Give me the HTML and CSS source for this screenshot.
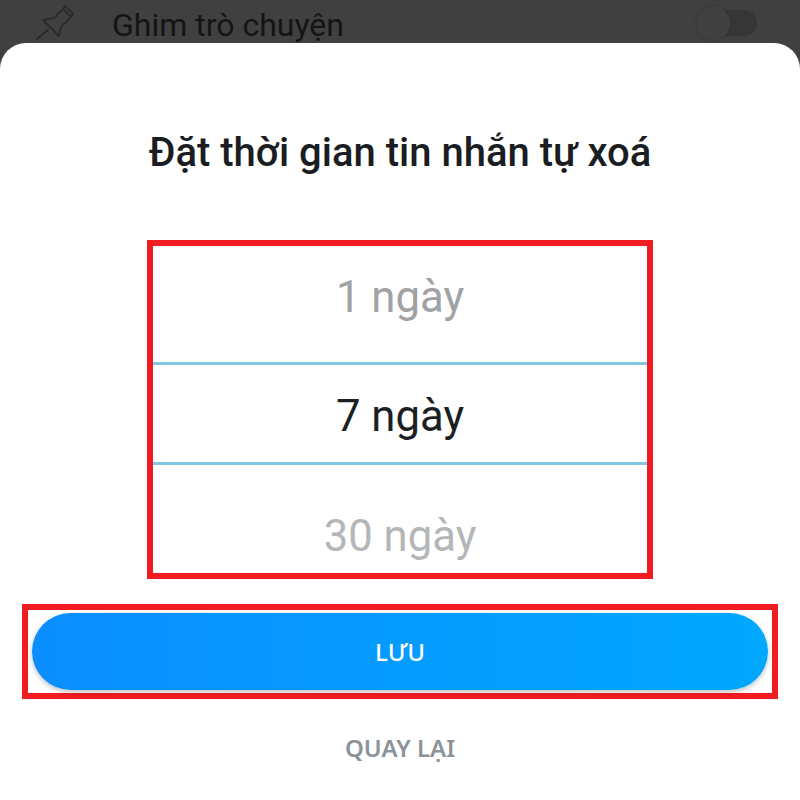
FILE: index.html
```html
<!DOCTYPE html>
<html lang="vi">
<head>
<meta charset="utf-8">
<title>Đặt thời gian tin nhắn tự xoá</title>
<link rel="stylesheet" href="styles.css">
</head>
<body>
<div class="backdrop">
  <svg class="pin" width="50" height="44" viewBox="0 0 50 44" fill="none" stroke="#2a2a2a" stroke-width="1.8" stroke-linejoin="round">
    <path d="M35 6 L43 14 L41 17 L33 9 Z"/>
    <path d="M33 9 L24 18 Q18 19 13 20 L29 36 Q30 31 31 27 L41 17"/>
    <path d="M18 30 L7 39" stroke-linecap="round"/>
  </svg>
  <span class="row-label">Ghim trò chuyện</span>
  <div class="toggle"><div class="knob"></div></div>
</div>
<main class="sheet">
  <h1 class="title">Đặt thời gian tin nhắn tự xoá</h1>
  <section class="picker">
    <div class="option option-top">1 ngày</div>
    <div class="option option-active">7 ngày</div>
    <div class="option option-bottom">30 ngày</div>
  </section>
  <div class="save-frame">
    <button class="save">LƯU</button>
  </div>
  <div class="back">QUAY LẠI</div>
</main>
</body>
</html>
```
FILE: styles.css
```css
* { box-sizing: border-box; }
html, body { margin: 0; padding: 0; }
body {
  width: 800px;
  height: 800px;
  overflow: hidden;
  background: #404040;
  font-family: Roboto, "Noto Sans", sans-serif;
  position: relative;
}
.backdrop {
  height: 43px;
  display: flex;
  align-items: flex-start;
  background: #404040;
  overflow: hidden;
  position: relative;
}
.pin { flex: none; margin: 0 0 0 30px; }
.row-label {
  margin: 5px 0 0 32px;
  font-size: 32px;
  line-height: 40px;
  color: #141414;
}
.toggle {
  width: 60px;
  height: 26px;
  margin: 10px 43px 0 auto;
  border-radius: 13px;
  background: #363636;
  position: relative;
}
.knob {
  position: absolute;
  left: -1px;
  top: -4px;
  width: 34px;
  height: 34px;
  border-radius: 50%;
  background: #414141;
  box-shadow: 0 0 2px #303030;
}
.sheet {
  height: 757px;
  background: #fff;
  border-radius: 26px 26px 0 0;
  display: flex;
  flex-direction: column;
  align-items: center;
}
.title {
  margin: 85px 0 0;
  height: 50px;
  font-size: 40px;
  line-height: 50px;
  font-weight: 500;
  color: #1a1d21;
  white-space: nowrap;
}
.picker {
  width: 506px;
  height: 339px;
  margin-top: 62px;
  border: 6px solid #f01c22;
  display: flex;
  flex-direction: column;
}
.option {
  display: flex;
  align-items: center;
  justify-content: center;
  font-size: 43.7px;
  white-space: nowrap;
}
.option-top { height: 116px; padding-bottom: 14px; color: #a0a2a4; }
.option-active {
  height: 103px;
  padding-top: 4px;
  color: #1c1f23;
  border-top: 3px solid #7ec8e3;
  border-bottom: 3px solid #7ec8e3;
}
.option-bottom { height: 108px; padding-top: 33px; color: #b4b6b8; }
.save-frame {
  width: 756px;
  height: 95px;
  margin-top: 25px;
  border: 6px solid #f01c22;
  padding: 3px 4px 0;
}
.save {
  display: block;
  width: 736px;
  height: 77px;
  border: 0;
  border-radius: 39px;
  background: linear-gradient(90deg, #0a8eff, #00a8ff);
  box-shadow: 0 2px 5px rgba(0, 0, 0, 0.25);
  color: #fff;
  font-family: "Noto Sans", sans-serif;
  font-size: 24px;
  font-weight: 500;
  padding: 0;
}
.back {
  margin-top: 32px;
  height: 34px;
  font-family: "Noto Sans", sans-serif;
  font-size: 24px;
  line-height: 34px;
  font-weight: 600;
  color: #8c9299;
  white-space: nowrap;
}
```
